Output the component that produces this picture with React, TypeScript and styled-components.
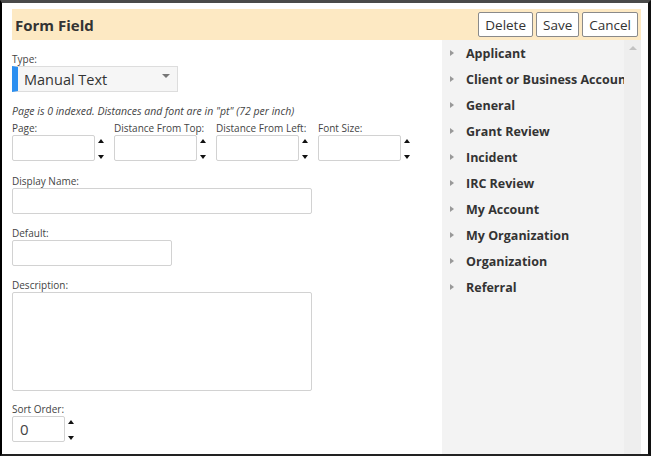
import React from 'react';
import styled, { createGlobalStyle } from 'styled-components';

const Global = createGlobalStyle`
  html, body { margin: 0; padding: 0; background: #fff; }
  body { font-family: "Open Sans", "Noto Sans", sans-serif; color: #333; }
  * { box-sizing: border-box; }
`;

const Frame = styled.div`
  width: 651px;
  height: 456px;
  border-top: 3px solid #4a4a4a;
  border-left: 2px solid #000;
  border-right: 3px solid #111;
  border-bottom: 2px solid #222;
  padding: 6px 7px 0 10px;
  display: flex;
  flex-direction: column;
  background: #fff;
  overflow: hidden;
`;

const Header = styled.div`
  height: 31px;
  flex: none;
  background: #fde9c3;
  display: flex;
  align-items: center;
  justify-content: space-between;
  padding: 0 3px;
`;

const Title = styled.div`
  font-size: 15px;
  font-weight: 700;
  color: #333;
`;

const Buttons = styled.div`
  display: flex;
  gap: 3px;
`;

const Button = styled.button`
  height: 25px;
  padding: 0 6px;
  background: #fff;
  border: 1px solid #8a8a8a;
  border-radius: 2px;
  font-family: inherit;
  font-size: 13.5px;
  color: #333;
`;

const Body = styled.div`
  flex: 1;
  min-height: 0;
  display: flex;
`;

const FormCol = styled.div`
  width: 430px;
  flex: none;
  padding-top: 12px;
  display: flex;
  flex-direction: column;
`;

const Label = styled.div`
  font-size: 10px;
  line-height: 14px;
  color: #444;
  white-space: nowrap;
`;

const Group = styled.div<{ $mt?: number }>`
  margin-top: ${p => p.$mt ?? 12}px;
  display: flex;
  flex-direction: column;
`;

const Select = styled.div`
  width: 166px;
  height: 26px;
  display: flex;
  align-items: center;
  background: #f6f6f6;
  border: 1px solid #ddd;
  border-left: 6px solid #2b8ff0;
  padding-left: 6px;
  padding-right: 7px;
  font-size: 14.5px;
  color: #333;
  justify-content: space-between;
`;

const Caret = styled.span`
  width: 0;
  height: 0;
  border-left: 4px solid transparent;
  border-right: 4px solid transparent;
  border-top: 4px solid #777;
  margin-bottom: 6px;
`;

const Note = styled.div`
  margin-top: 12px;
  font-size: 10.5px;
  font-style: italic;
  line-height: 14px;
  color: #444;
`;

const SpinRow = styled.div`
  margin-top: 3px;
  display: flex;
`;

const SpinGroup = styled.div`
  width: 102px;
  display: flex;
  flex-direction: column;
`;

const InputRow = styled.div`
  display: flex;
  align-items: stretch;
`;

const Input = styled.div<{ $w: number; $h?: number }>`
  width: ${p => p.$w}px;
  height: ${p => p.$h ?? 26}px;
  border: 1px solid #d2d2d2;
  border-radius: 2px;
  background: #fff;
  font-size: 15px;
  color: #444;
  padding-left: 7px;
  display: flex;
  align-items: center;
`;

const Arrows = styled.div`
  margin-left: 3px;
  width: 7px;
  padding: 4px 0 2px;
  display: flex;
  flex-direction: column;
  justify-content: space-between;
`;

const Up = styled.span`
  width: 0;
  height: 0;
  border-left: 3.5px solid transparent;
  border-right: 3.5px solid transparent;
  border-bottom: 4px solid #111;
`;

const Down = styled.span`
  width: 0;
  height: 0;
  border-left: 3.5px solid transparent;
  border-right: 3.5px solid transparent;
  border-top: 4px solid #111;
`;

const Panel = styled.div`
  flex: 1;
  display: flex;
  background: #f3f3f3;
  min-width: 0;
`;

const Tree = styled.div`
  flex: 1;
  min-width: 0;
  overflow: hidden;
`;

const TreeItem = styled.div`
  height: 26px;
  display: flex;
  align-items: center;
  padding-left: 8px;
  white-space: nowrap;
  font-size: 12.5px;
  font-weight: 700;
  color: #333;
`;

const TreeArrow = styled.span`
  flex: none;
  width: 0;
  height: 0;
  border-top: 3.5px solid transparent;
  border-bottom: 3.5px solid transparent;
  border-left: 4px solid #999;
  margin-right: 12px;
`;

const Track = styled.div`
  width: 17px;
  flex: none;
  background: #eeeeee;
  display: flex;
  justify-content: center;
  padding-top: 6px;
`;

const TrackUp = styled.span`
  width: 0;
  height: 0;
  border-left: 4px solid transparent;
  border-right: 4px solid transparent;
  border-bottom: 4px solid #c2c2c2;
`;

const Spinner = () => (
  <Arrows>
    <Up />
    <Down />
  </Arrows>
);

const categories = [
  'Applicant',
  'Client or Business Account',
  'General',
  'Grant Review',
  'Incident',
  'IRC Review',
  'My Account',
  'My Organization',
  'Organization',
  'Referral',
];

const spinFields = ['Page:', 'Distance From Top:', 'Distance From Left:', 'Font Size:'];

export default function App() {
  return (
    <>
      <Global />
      <Frame>
        <Header>
          <Title>Form Field</Title>
          <Buttons>
            <Button>Delete</Button>
            <Button>Save</Button>
            <Button>Cancel</Button>
          </Buttons>
        </Header>
        <Body>
          <FormCol>
            <Group $mt={0}>
              <Label>Type:</Label>
              <Select>
                <span>Manual Text</span>
                <Caret />
              </Select>
            </Group>
            <Note>Page is 0 indexed. Distances and font are in "pt" (72 per inch)</Note>
            <SpinRow>
              {spinFields.map(f => (
                <SpinGroup key={f}>
                  <Label>{f}</Label>
                  <InputRow>
                    <Input $w={83} />
                    <Spinner />
                  </InputRow>
                </SpinGroup>
              ))}
            </SpinRow>
            <Group $mt={13}>
              <Label>Display Name:</Label>
              <Input $w={300} />
            </Group>
            <Group>
              <Label>Default:</Label>
              <Input $w={160} />
            </Group>
            <Group>
              <Label>Description:</Label>
              <Input $w={300} $h={99} />
            </Group>
            <Group $mt={11}>
              <Label>Sort Order:</Label>
              <InputRow>
                <Input $w={53}>0</Input>
                <Spinner />
              </InputRow>
            </Group>
          </FormCol>
          <Panel>
            <Tree>
              {categories.map(c => (
                <TreeItem key={c}>
                  <TreeArrow />
                  {c}
                </TreeItem>
              ))}
            </Tree>
            <Track>
              <TrackUp />
            </Track>
          </Panel>
        </Body>
      </Frame>
    </>
  );
}
